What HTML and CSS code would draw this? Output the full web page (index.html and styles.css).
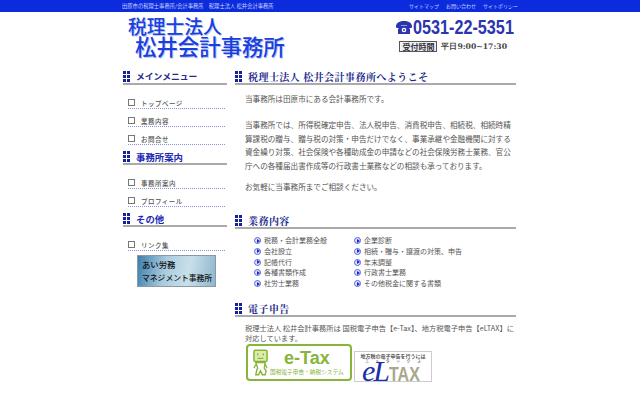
FILE: index.html
```html
<!DOCTYPE html>
<html lang="ja">
<head>
<meta charset="utf-8">
<title>税理士法人 松井会計事務所</title>
<link rel="stylesheet" href="styles.css">
</head>
<body>
<div class="topbar">
  <div class="topbar-in">
    <span class="crumb">田原市の税理士事務所/会計事務所　税理士法人 松井会計事務所</span>
    <span class="toplinks"><span>サイトマップ</span><span>お問い合わせ</span><span>サイトポリシー</span></span>
  </div>
</div>
<div class="wrap">
  <header class="head">
    <div class="logo"><div>税理士法人</div><div class="logo2">松井会計事務所</div></div>
    <div class="contact">
      <div class="tel">
        <svg class="telicon" viewBox="0 0 16 13"><path d="M0 5.5C0 1.5 4 0 8 0s8 1.500 8 5.500c0 1-.5 1.500-1.500 1.500h-2c-1 0-1.500-.5-1.500-1.500V4.500H5v1c0 1-.5 1.500-1.500 1.500h-2C.5 7 0 6.500 0 5.500z" fill="#2b35b0"/><path d="M5 5h6l3 3v5H2V8z" fill="#2b35b0"/><circle cx="8" cy="9" r="2.300" fill="#fff"/><circle cx="8" cy="9" r="1" fill="#2b35b0"/></svg>
        <span class="telnum">0531-22-5351</span>
      </div>
      <div class="hours"><span class="badge">受付時間</span><span class="time">平日9:00~17:30</span></div>
    </div>
  </header>
  <div class="cols">
    <nav class="side">
      <h3 class="sidehead"><i class="dots"></i><span class="katakana">メインメニュー</span></h3>
      <ul class="menu">
        <li>トップページ</li>
        <li>業務内容</li>
        <li>お問合せ</li>
      </ul>
      <h3 class="sidehead"><i class="dots"></i><span>事務所案内</span></h3>
      <ul class="menu">
        <li>事務所案内</li>
        <li>プロフィール</li>
      </ul>
      <h3 class="sidehead"><i class="dots"></i><span>その他</span></h3>
      <ul class="menu">
        <li>リンク集</li>
      </ul>
      <div class="banner"><div class="banner1">あい労務</div><div>マネジメント事務所</div></div>
    </nav>
    <main class="main">
      <h2 class="mainhead"><i class="dots"></i><span>税理士法人 松井会計事務所へようこそ</span></h2>
      <div class="body">
        <p class="p1">当事務所は田原市にある会計事務所です。</p>
        <p class="p2">当事務所では、所得税確定申告、法人税申告、消費税申告、相続税、相続時精算課税の贈与、贈与税の対策・申告だけでなく、事業承継や金融機関に対する資金繰り対策、社会保険や各種助成金の申請などの社会保険労務士業務、官公庁への各種届出書作成等の行政書士業務などの相談も承っております。</p>
        <p class="p3">お気軽に当事務所までご相談ください。</p>
      </div>
      <h2 class="mainhead h-gyomu"><i class="dots"></i><span>業務内容</span></h2>
      <div class="services">
        <ul class="svc svc1">
          <li>税務・会計業務全般</li>
          <li>会社設立</li>
          <li>記帳代行</li>
          <li>各種書類作成</li>
          <li>社労士業務</li>
        </ul>
        <ul class="svc">
          <li>企業診断</li>
          <li>相続・贈与・譲渡の対策、申告</li>
          <li>年末調整</li>
          <li>行政書士業務</li>
          <li>その他税金に関する書類</li>
        </ul>
      </div>
      <h2 class="mainhead h-denshi"><i class="dots"></i><span>電子申告</span></h2>
      <p class="etaxtext">税理士法人 松井会計事務所は 国税電子申告【e-Tax】、地方税電子申告【eLTAX】に対応しています。</p>
      <div class="logos">
        <div class="etax">
          <svg class="etaxman" viewBox="0 0 16 28"><rect x="1" y="1" width="14" height="12" rx="1.500" fill="#dcebae" stroke="#86b53a" stroke-width="1.600"/><path d="M5 4v2.500M11 4v2.500M5 9.500h6" stroke="#86b53a" stroke-width="1.300" fill="none"/><path d="M3 14h10l-1 6 2 3-1 4h-3l-2-4-2 4H3l1-5 1-2z" fill="#fff" stroke="#86b53a" stroke-width="1.500"/><path d="M3 16l-2 4M13 16l2 4" stroke="#86b53a" stroke-width="1.300"/></svg>
          <div class="etaxcopy"><div class="etaxname">e-Tax</div><div class="etaxsub">国税電子申告・納税システム</div></div>
        </div>
        <div class="eltax">
          <div class="eltop">地方税の電子申告を行うには</div>
          <div class="elkana"><span>エ</span><span>ル</span><span>タ</span><span>ッ</span><span>ク</span><span>ス</span></div>
          <div class="elmark"><span class="el-e">e</span><span class="el-l">L</span><span class="el-t">TAX</span></div>
        </div>
      </div>
      <h2 class="mainhead h-next"><i class="dots"></i></h2>
    </main>
  </div>
</div>
</body>
</html>
```
FILE: styles.css
```css
html,body{margin:0;padding:0;height:400px;overflow:hidden;background:#fff;}
body{font-family:"Noto Sans CJK JP","Liberation Sans",sans-serif;color:#444;}
ul{list-style:none;margin:0;padding:0;}
h2,h3,p{margin:0;}
.topbar{height:12px;background:#0b2bdc;}
.topbar-in{width:396px;margin-left:122px;display:flex;justify-content:space-between;font-size:5.3px;line-height:12px;color:#c8d4ff;white-space:nowrap;}
.toplinks{display:flex;gap:7px;font-size:5px;}
.wrap{width:396px;margin-left:122px;}
.head{height:56px;display:flex;justify-content:space-between;}
.logo{font-size:18.800px;line-height:20px;font-weight:500;color:#1a3fe0;padding:4px 0 0 6px;text-shadow:1px 1px 0 #bcc8ee;white-space:nowrap;}
.logo2{padding-left:7px;font-size:21.400px;}
.contact{padding:5px 4px 0 0;display:flex;flex-direction:column;align-items:flex-end;}
.tel{display:flex;align-items:center;gap:1px;color:#2b35b0;font:bold 20px/20px "Liberation Sans",sans-serif;}
.telnum{display:block;width:101px;white-space:nowrap;transform:scaleX(.81);transform-origin:left center;}
.telicon{width:16px;height:13px;}
.hours{display:flex;align-items:center;gap:4px;margin-top:4px;padding-right:7px;}
.badge{font-size:8px;line-height:9px;font-weight:700;color:#333;border:1px solid #555;background:#eef0fa;padding:0 2px;}
.time{font:bold 7.700px/10px "DejaVu Serif",serif;color:#444;white-space:nowrap;}
.cols{display:flex;gap:8px;}
.side{width:104px;flex:none;margin-left:1px;}
.main{width:281px;flex:none;}
.dots{flex:none;display:block;width:7px;height:11px;background:repeating-linear-gradient(90deg,#14209c 0 3px,transparent 3px 4px);position:relative;}
.dots::after{content:"";position:absolute;inset:0;background:repeating-linear-gradient(180deg,transparent 0 3px,#fff 3px 4px);}
.sidehead{display:flex;align-items:center;gap:6px;height:13px;padding-top:2px;border-bottom:2px solid #aaa;color:#1a28b4;font-size:9.400px;line-height:12px;font-weight:700;margin-top:3px;}
.sidehead:first-child{margin-top:0;}
.sidehead span.katakana{font-size:8.800px;color:#222a8c;}
.menu{padding:6px 0 0 5px;}
.menu li{height:18px;box-sizing:border-box;border-bottom:1px dotted #8a8fe0;padding:7px 0 0 13px;position:relative;font-size:6.500px;line-height:10px;font-weight:500;color:#555;letter-spacing:.5px;width:97px;}
.menu li::before{content:"";position:absolute;left:0;top:8px;width:5px;height:5px;border:1px solid #777;}
.banner{width:79px;height:32px;margin:4px 0 0 14px;background:linear-gradient(100deg,#3d7fae,#a9cbde 35%,#c9e0ea 65%,#8db7cd);border:1px solid #8a9aa5;font-size:7.800px;line-height:13px;font-weight:500;color:#111;padding:2px 0 0 4px;box-sizing:border-box;white-space:nowrap;}
.banner1{font-size:8.400px;}
.mainhead{display:flex;align-items:center;gap:6px;height:13px;padding-top:2px;border-bottom:2px solid #aaa;font:700 10px/13px "Noto Serif CJK JP","Noto Sans CJK JP",serif;color:#222a8c;letter-spacing:.45px;}
.mainhead span{white-space:nowrap;}
.body{font-size:7.600px;line-height:13.500px;color:#555;padding:7px 0 0 10px;width:270px;}
.p2{margin-top:12.500px;}
.p3{margin-top:8px;}
.h-gyomu{margin-top:18px;}
.services{display:flex;padding:6.600px 0 0 19px;font-size:7px;line-height:10.750px;color:#555;}
.svc1{width:100px;}
.svc li{padding-left:10px;position:relative;white-space:nowrap;}
.svc li::before{content:"";position:absolute;left:0;top:2px;width:7px;height:7px;border-radius:50%;background:#dbe0ff;border:1px solid #5a66d8;box-sizing:border-box;}
.svc li::after{content:"";position:absolute;left:2.500px;top:3.500px;border-left:3px solid #1a28b4;border-top:2px solid transparent;border-bottom:2px solid transparent;}
.h-denshi{margin-top:11.600px;}
.etaxtext{font-size:7.250px;line-height:10.500px;color:#555;padding:5.500px 0 0 10px;width:270px;}
.logos{display:flex;align-items:flex-start;gap:2px;padding-left:11px;}
.etax{width:106px;height:37px;box-sizing:border-box;border:2px solid #86b53a;border-radius:4px;background:#fff;display:flex;align-items:center;padding-left:5px;gap:2px;}
.etaxman{width:15px;height:27px;flex:none;}
.etaxcopy{text-align:center;}
.etaxname{font:700 18px/18px "Liberation Sans",sans-serif;color:#86b53a;}
.etaxsub{font-size:5.700px;line-height:8px;color:#86b53a;white-space:nowrap;margin-top:1px;}
.eltax{width:78px;height:31px;box-sizing:border-box;margin-top:7px;border:1px solid #ccc;}
.eltop{font-size:5px;line-height:6px;text-align:center;color:#333;padding-top:1px;white-space:nowrap;font-weight:500;}
.elkana{font-size:4px;line-height:5px;display:flex;justify-content:space-between;padding:0 10px;color:#333;}
.elmark{padding-left:7px;white-space:nowrap;display:flex;align-items:baseline;height:14px;}
.el-e{font:italic 30px/14px "Liberation Serif",serif;color:#1c2fa8;}
.el-l{font:italic 30px/14px "Liberation Serif",serif;color:#1c2fa8;margin-left:-2px;}
.el-t{display:block;font:700 20px/14px "Liberation Sans",sans-serif;color:#a8a88a;margin-left:-1px;transform:scaleX(.8);transform-origin:left center;}
.h-next{margin-top:16px;border:0;}
```
